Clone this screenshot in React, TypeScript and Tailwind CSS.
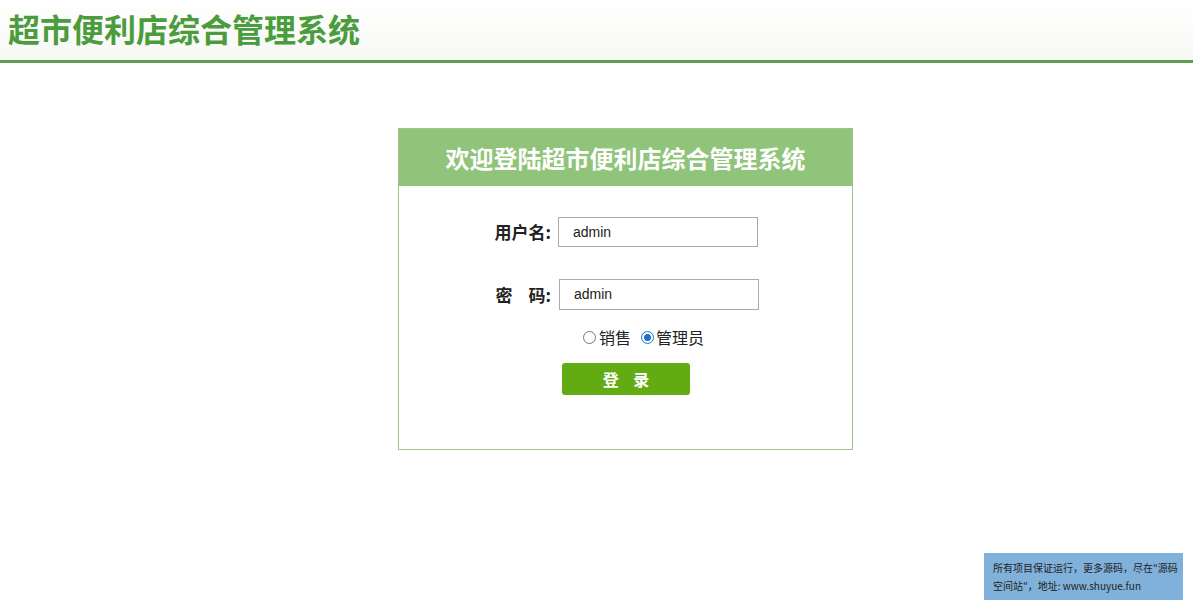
import React from "react";

export default function App() {
  const font = { fontFamily: '"Noto Sans CJK SC", "Liberation Sans", sans-serif' };
  const latin = { fontFamily: '"Liberation Sans", "Noto Sans CJK SC", sans-serif' };
  return (
    <div className="relative w-[1193px] h-[600px] bg-white overflow-hidden" style={font}>
      <div className="h-[60px] flex items-center pl-[8px] bg-gradient-to-b from-white to-[#f7f7f4]">
        <h1 className="text-[32px] font-bold text-[#4a9c3d] leading-none mt-[-4px]">超市便利店综合管理系统</h1>
      </div>
      <div className="h-[3px] bg-[#5f9e51]" />
      <div className="flex justify-center pt-[65px] pl-[58px]">
        <div className="w-[455px] h-[322px] border border-[#9fc28f] flex flex-col">
          <div className="h-[57px] bg-[#8fc47a] flex items-center justify-center">
            <span className="text-white font-bold text-[24px] leading-none">欢迎登陆超市便利店综合管理系统</span>
          </div>
          <div className="flex flex-col items-start pt-[31px]">
            <div className="flex items-center pl-[88px]">
              <span className="text-[17px] font-bold text-[#222] w-[64px] text-right mr-[7px]">用户名:</span>
              <div className="w-[200px] h-[30px] border border-[#aaa] flex items-center pl-[14px] text-[14px] text-[#222]" style={latin}>admin</div>
            </div>
            <div className="flex items-center pl-[88px] mt-[32px]">
              <span className="text-[17px] font-bold text-[#222] w-[64px] flex justify-end mr-[8px]">
                <span>密</span>
                <span className="ml-[16px]">码:</span>
              </span>
              <div className="w-[200px] h-[31px] border border-[#aaa] flex items-center pl-[14px] text-[14px] text-[#222]" style={latin}>admin</div>
            </div>
            <div className="flex items-center mt-[19px] pl-[184px] text-[16px] text-[#222] leading-none">
              <span className="w-[13px] h-[13px] rounded-full border border-[#777] bg-white mr-[3px]" />
              <span>销售</span>
              <span className="w-[13px] h-[13px] rounded-full border border-[#1a73c8] bg-white ml-[10px] mr-[2px] flex items-center justify-center">
                <span className="w-[7px] h-[7px] rounded-full bg-[#1a73c8]" />
              </span>
              <span>管理员</span>
            </div>
            <div className="mt-[18px] ml-[163px] w-[128px] h-[32px] rounded-[3px] bg-[#63ab13] flex items-center justify-center text-white font-bold text-[16px] whitespace-pre">登    录</div>
          </div>
        </div>
      </div>
      <div className="absolute left-[984px] top-[553px] w-[199px] h-[47px] bg-[#7fb1da] px-[9px] pt-[6px] text-[10px] leading-[18px] text-[#222] whitespace-nowrap">
        所有项目保证运行，更多源码，尽在"源码
        <br />
        空间站"，地址: www.shuyue.fun
      </div>
    </div>
  );
}
